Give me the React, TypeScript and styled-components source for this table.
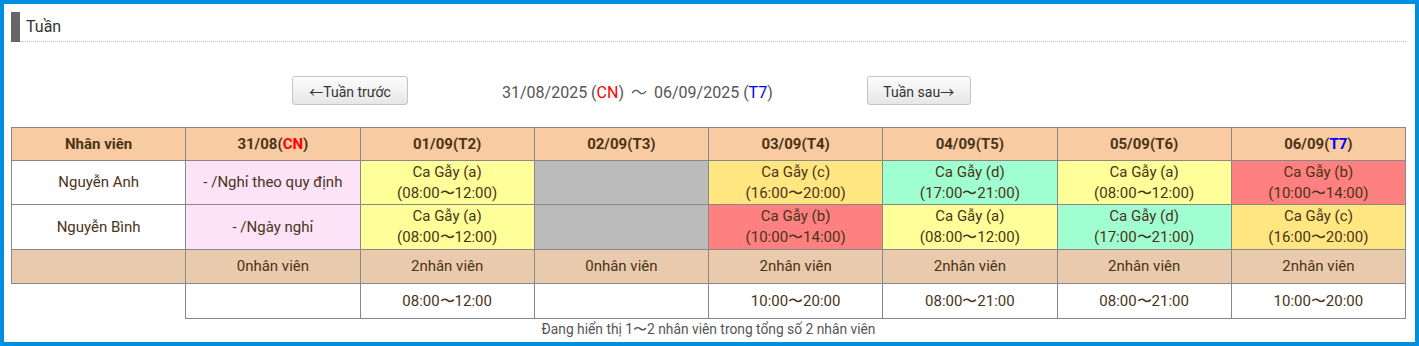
import React from "react";
import styled, { createGlobalStyle } from "styled-components";

const GlobalStyle = createGlobalStyle`
  html, body {
    margin: 0;
    padding: 0;
    background: #fff;
    font-family: Roboto, "Noto Sans", "Liberation Sans", sans-serif;
  }
`;

const Frame = styled.div`
  box-sizing: border-box;
  width: 1419px;
  height: 346px;
  border: 4px solid #008fe0;
  padding: 8px 9px 0 7px;
  background: #fff;
  overflow: hidden;
`;

const TitleRow = styled.div`
  display: flex;
  align-items: stretch;
  height: 30px;
`;

const TitleBar = styled.div`
  width: 9px;
  background: #666;
`;

const TitleText = styled.div`
  flex: 1;
  box-sizing: border-box;
  height: 30px;
  padding-left: 6px;
  border-bottom: 1px dotted #bbb;
  font-size: 16px;
  line-height: 29px;
  color: #333;
`;

const Nav = styled.div`
  display: flex;
  align-items: center;
  gap: 94px;
  margin: 34px 0 0 281px;
  height: 29px;
`;

const NavButton = styled.button<{ $w: number }>`
  box-sizing: border-box;
  width: ${(p) => p.$w}px;
  height: 29px;
  border: 1px solid #c4c4c4;
  border-radius: 3px;
  background: linear-gradient(#fdfdfd, #e6e6e6);
  font-family: Roboto, "Noto Sans", sans-serif;
  font-size: 14px;
  color: #333;
  padding: 0;
  cursor: pointer;
`;

const Arrow = styled.span`
  font-family: "Noto Sans CJK JP", sans-serif;
`;

const Wave = styled.span`
  font-family: "Noto Sans CJK JP", sans-serif;
  margin: 0 7px;
`;

const DateRange = styled.div`
  font-size: 16px;
  color: #555;
`;

const Red = styled.span`
  color: #ff0000;
`;

const Blue = styled.span`
  color: #0000ff;
`;

const Table = styled.table`
  margin-top: 22px;
  width: 1395px;
  border-collapse: collapse;
  table-layout: fixed;
  font-size: 15px;
  color: #4a3418;
`;

const Th = styled.th`
  height: 32px;
  padding: 0;
  border: 1px solid #888;
  background: #f8cba3;
  font-weight: bold;
  text-align: center;
`;

const Td = styled.td<{ $bg?: string; $h?: number }>`
  height: ${(p) => p.$h ?? 43}px;
  padding: 0;
  border: 1px solid #888;
  background: ${(p) => p.$bg ?? "#fff"};
  text-align: center;
  line-height: 21px;
`;

const BlankTd = styled.td`
  border: none;
  padding: 0;
`;

const Footer = styled.div`
  text-align: center;
  font-size: 13.8px;
  line-height: 20px;
  color: #555;
`;

const colors: Record<string, string> = {
  a: "#ffff99",
  b: "#ff8080",
  c: "#ffe680",
  d: "#a0ffd0",
};

const times: Record<string, string> = {
  a: "08:00〜12:00",
  b: "10:00〜14:00",
  c: "16:00〜20:00",
  d: "17:00〜21:00",
};

const days = [
  { d: "31/08", w: "CN" },
  { d: "01/09", w: "T2" },
  { d: "02/09", w: "T3" },
  { d: "03/09", w: "T4" },
  { d: "04/09", w: "T5" },
  { d: "05/09", w: "T6" },
  { d: "06/09", w: "T7" },
];

type Cell = { off: string } | { shift: string } | { none: true };

const staff: { name: string; cells: Cell[] }[] = [
  {
    name: "Nguyễn Anh",
    cells: [
      { off: "- /Nghỉ theo quy định" },
      { shift: "a" },
      { none: true },
      { shift: "c" },
      { shift: "d" },
      { shift: "a" },
      { shift: "b" },
    ],
  },
  {
    name: "Nguyễn Bình",
    cells: [
      { off: "- /Ngày nghỉ" },
      { shift: "a" },
      { none: true },
      { shift: "b" },
      { shift: "a" },
      { shift: "d" },
      { shift: "c" },
    ],
  },
];

const counts = ["0", "2", "0", "2", "2", "2", "2"];
const spans = ["", "08:00〜12:00", "", "10:00〜20:00", "08:00〜21:00", "08:00〜21:00", "10:00〜20:00"];

function Weekday({ w }: { w: string }) {
  if (w === "CN") return <Red>{w}</Red>;
  if (w === "T7") return <Blue>{w}</Blue>;
  return <>{w}</>;
}

function renderCell(c: Cell, i: number, h: number) {
  if ("off" in c) {
    return (
      <Td key={i} $bg="#fde3f8" $h={h}>
        {c.off}
      </Td>
    );
  }
  if ("shift" in c) {
    return (
      <Td key={i} $bg={colors[c.shift]} $h={h}>
        Ca Gẫy ({c.shift})
        <br />({times[c.shift]})
      </Td>
    );
  }
  return <Td key={i} $bg="#bbbbbb" $h={h} />;
}

export default function App() {
  return (
    <>
      <GlobalStyle />
      <Frame>
        <TitleRow>
          <TitleBar />
          <TitleText>Tuần</TitleText>
        </TitleRow>
        <Nav>
          <NavButton $w={116}>
            <Arrow>←</Arrow>Tuần trước
          </NavButton>
          <DateRange>
            31/08/2025 (<Red>CN</Red>)<Wave>〜</Wave>06/09/2025 (<Blue>T7</Blue>)
          </DateRange>
          <NavButton $w={104}>
            Tuần sau<Arrow>→</Arrow>
          </NavButton>
        </Nav>
        <Table>
          <thead>
            <tr>
              <Th>Nhân viên</Th>
              {days.map((d) => (
                <Th key={d.d}>
                  {d.d}(<Weekday w={d.w} />)
                </Th>
              ))}
            </tr>
          </thead>
          <tbody>
            {staff.map((s, r) => (
              <tr key={s.name}>
                <Td $h={r === 0 ? 43 : 44}>{s.name}</Td>
                {s.cells.map((c, i) => renderCell(c, i, r === 0 ? 43 : 44))}
              </tr>
            ))}
            <tr>
              <Td $bg="#e9caad" $h={33} />
              {counts.map((n, i) => (
                <Td key={i} $bg="#e9caad" $h={33}>
                  {n}nhân viên
                </Td>
              ))}
            </tr>
            <tr>
              <BlankTd />
              {spans.map((t, i) => (
                <Td key={i} $h={34}>
                  {t}
                </Td>
              ))}
            </tr>
          </tbody>
        </Table>
        <Footer>Đang hiển thị 1〜2 nhân viên trong tổng số 2 nhân viên</Footer>
      </Frame>
    </>
  );
}
